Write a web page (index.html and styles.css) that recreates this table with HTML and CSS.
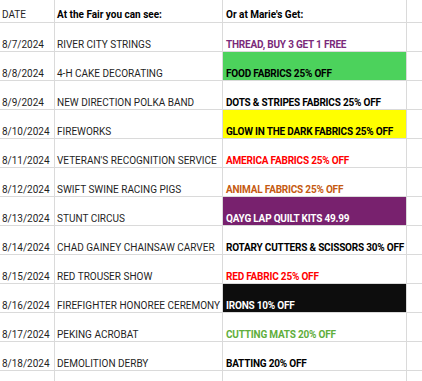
FILE: index.html
```html
<!DOCTYPE html>
<html>
<head>
<meta charset="utf-8">
<link rel="stylesheet" href="styles.css">
</head>
<body>
<div class="sheet">
  <div class="row head">
    <div class="cell c1">DATE</div>
    <div class="cell c2 b">At the Fair you can see:</div>
    <div class="cell c3 b">Or at Marie's Get:</div>
    <div class="cell c4"></div>
  </div>
  <div class="row">
    <div class="cell c1">8/7/2024</div>
    <div class="cell c2">RIVER CITY STRINGS</div>
    <div class="cell c3 b caps t-purple">THREAD, BUY 3 GET 1 FREE</div>
    <div class="cell c4"></div>
  </div>
  <div class="row">
    <div class="cell c1">8/8/2024</div>
    <div class="cell c2">4-H CAKE DECORATING</div>
    <div class="cell c3 b caps f-green">FOOD FABRICS 25% OFF</div>
    <div class="cell c4"></div>
  </div>
  <div class="row">
    <div class="cell c1">8/9/2024</div>
    <div class="cell c2">NEW DIRECTION POLKA BAND</div>
    <div class="cell c3 b caps">DOTS &amp; STRIPES FABRICS 25% OFF</div>
    <div class="cell c4"></div>
  </div>
  <div class="row">
    <div class="cell c1">8/10/2024</div>
    <div class="cell c2">FIREWORKS</div>
    <div class="cell c3 b caps f-yellow">GLOW IN THE DARK FABRICS 25% OFF</div>
    <div class="cell c4"></div>
  </div>
  <div class="row">
    <div class="cell c1">8/11/2024</div>
    <div class="cell c2">VETERAN'S RECOGNITION SERVICE</div>
    <div class="cell c3 b caps t-red">AMERICA FABRICS 25% OFF</div>
    <div class="cell c4"></div>
  </div>
  <div class="row">
    <div class="cell c1">8/12/2024</div>
    <div class="cell c2">SWIFT SWINE RACING PIGS</div>
    <div class="cell c3 b caps t-orange">ANIMAL FABRICS 25% OFF</div>
    <div class="cell c4"></div>
  </div>
  <div class="row">
    <div class="cell c1">8/13/2024</div>
    <div class="cell c2">STUNT CIRCUS</div>
    <div class="cell c3 b caps f-purple">QAYG LAP QUILT KITS 49.99</div>
    <div class="cell c4"></div>
  </div>
  <div class="row">
    <div class="cell c1">8/14/2024</div>
    <div class="cell c2">CHAD GAINEY CHAINSAW CARVER</div>
    <div class="cell c3 b caps">ROTARY CUTTERS &amp; SCISSORS 30% OFF</div>
    <div class="cell c4"></div>
  </div>
  <div class="row">
    <div class="cell c1">8/15/2024</div>
    <div class="cell c2">RED TROUSER SHOW</div>
    <div class="cell c3 b caps t-red">RED FABRIC 25% OFF</div>
    <div class="cell c4"></div>
  </div>
  <div class="row">
    <div class="cell c1">8/16/2024</div>
    <div class="cell c2">FIREFIGHTER HONOREE CEREMONY</div>
    <div class="cell c3 b caps f-black">IRONS 10% OFF</div>
    <div class="cell c4"></div>
  </div>
  <div class="row">
    <div class="cell c1">8/17/2024</div>
    <div class="cell c2">PEKING ACROBAT</div>
    <div class="cell c3 b caps t-green">CUTTING MATS 20% OFF</div>
    <div class="cell c4"></div>
  </div>
  <div class="row">
    <div class="cell c1">8/18/2024</div>
    <div class="cell c2">DEMOLITION DERBY</div>
    <div class="cell c3 b caps">BATTING 20% OFF</div>
    <div class="cell c4"></div>
  </div>
  <div class="row tail">
    <div class="cell c1"></div>
    <div class="cell c2"></div>
    <div class="cell c3"></div>
    <div class="cell c4"></div>
  </div>
</div>
</body>
</html>
```
FILE: styles.css
```css
html, body {
  margin: 0;
  padding: 0;
  background: #ffffff;
}
body {
  font-family: Roboto, "Liberation Sans", Arial, sans-serif;
  font-size: 10px;
  color: #1f1f1f;
  width: 422px;
  height: 381px;
  overflow: hidden;
}
.sheet {
  display: flex;
  flex-direction: column;
}
.row {
  display: flex;
  height: 29px;
}
.row.head {
  height: 23px;
}
.row.head .cell {
  padding-bottom: 1px;
}
.row.tail {
  height: 20px;
}
.row.tail .cell {
  border-bottom: none;
}
.cell {
  box-sizing: border-box;
  display: flex;
  align-items: flex-end;
  padding-bottom: 0;
  border-right: 1px solid #dadada;
  border-bottom: 1px solid #dadada;
  white-space: nowrap;
  overflow: visible;
  line-height: 12px;
}
.c1 { width: 55px; padding-left: 2px; }
.c2 { width: 168px; padding-left: 2px; }
.c3 { width: 184px; padding-left: 3px; }
.c4 { flex: 1; border-right: none; }
.b { font-weight: bold; color: #000; }
.caps { letter-spacing: -0.2px; }
.t-purple { color: #7a2a7a; }
.t-red { color: #ff0000; }
.t-orange { color: #c55a11; }
.t-green { color: #5fae3c; }
.f-green { background: #4cd25c; }
.f-yellow { background: #ffff00; }
.f-purple { background: #78216e; color: #ffffff; }
.f-black { background: #0d0d0d; color: #ffffff; }
```
